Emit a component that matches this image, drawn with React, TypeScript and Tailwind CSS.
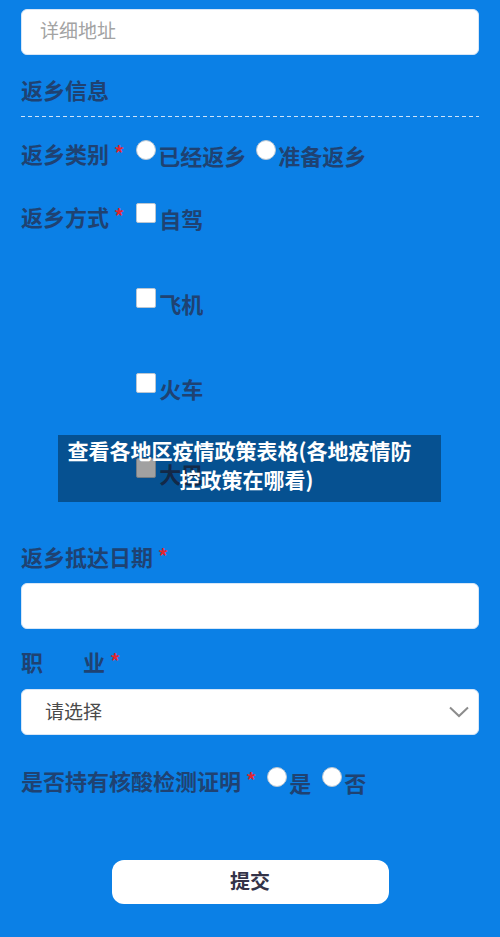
import type { ReactNode } from "react";

const labelCls = "text-[22px] font-bold leading-[30px] text-[#1f4272]";

function Star() {
  return <span className="ml-[5px] text-[20px] font-bold leading-[30px] text-[#e3262e]">*</span>;
}

function Radio({ label, className = "" }: { label: string; className?: string }) {
  return (
    <label className={`flex items-start ${className}`}>
      <span className="mt-[2px] h-[20px] w-[20px] shrink-0 rounded-full border border-[#b9c6d3] bg-white" />
      <span className={`ml-[2px] mt-[2px] ${labelCls}`}>{label}</span>
    </label>
  );
}

function Checkbox({ label }: { label: string }) {
  return (
    <label className="flex items-start">
      <span className="mt-[2px] h-[20px] w-[20px] shrink-0 rounded-[2px] border border-[#b9c6d3] bg-white" />
      <span className={`ml-[3px] mt-[2px] ${labelCls}`}>{label}</span>
    </label>
  );
}

function Field({ children, className = "" }: { children?: ReactNode; className?: string }) {
  return (
    <div
      className={`flex h-[46px] items-center rounded-[6px] border border-[#d6e6f7] bg-white text-[19px] ${className}`}
    >
      {children}
    </div>
  );
}

export default function App() {
  return (
    <div className="relative min-h-[937px] w-[500px] overflow-hidden bg-[#0b80e6] font-['Noto_Sans_CJK_SC','Noto_Sans',sans-serif]">
      <div className="px-[21px] pt-[9px]">
        <Field className="pl-[18px] text-[#a3a3a3]">
          <span className="-mt-[3px]">详细地址</span>
        </Field>

        <h2 className={`mt-[19px] ${labelCls}`}>返乡信息</h2>
        <div className="mt-[12px] h-px bg-[repeating-linear-gradient(90deg,#cde3fa_0_4px,transparent_4px_7px)]" />

        <div className="mt-[21px] flex items-start">
          <span className={labelCls}>返乡类别</span>
          <Star />
          <Radio label="已经返乡" className="ml-[12px]" />
          <Radio label="准备返乡" className="ml-[10px]" />
        </div>

        <div className="mt-[31px] flex items-start">
          <span className={labelCls}>返乡方式</span>
          <Star />
          <div className="ml-[12px] flex flex-col gap-[53px]">
            <Checkbox label="自驾" />
            <Checkbox label="飞机" />
            <Checkbox label="火车" />
            <Checkbox label="大巴" />
          </div>
        </div>

        <div className="mt-[53px] flex items-start">
          <span className={labelCls}>返乡抵达日期</span>
          <Star />
        </div>
        <Field className="mt-[12px]" />

        <div className="mt-[17px] flex items-start">
          <span className={labelCls}>职</span>
          <span className={`ml-[40px] ${labelCls}`}>业</span>
          <Star />
        </div>
        <Field className="mt-[13px] justify-between pl-[23px] pr-[9px] text-[#4a4a4a]">
          <span className="-mt-[1px]">请选择</span>
          <svg width="20" height="12" viewBox="0 0 20 12" fill="none">
            <polyline points="1,1.5 10,10 19,1.5" stroke="#8c8c8c" strokeWidth="2" />
          </svg>
        </Field>

        <div className="mt-[30px] flex items-start">
          <span className={labelCls}>是否持有核酸检测证明</span>
          <Star />
          <Radio label="是" className="ml-[11px]" />
          <Radio label="否" className="ml-[11px]" />
        </div>

        <div className="mt-[63px] flex justify-center">
          <button className="h-[44px] w-[277px] rounded-[12px] bg-white pb-[2px] text-[20px] font-bold text-[#333348]">
            提交
          </button>
        </div>
      </div>

      <div className="absolute left-[58px] top-[435px] flex h-[67px] w-[383px] flex-col bg-black/[0.37] pt-px text-center text-[21px] font-bold leading-[29px] text-white">
        <span className="pr-[20px]">查看各地区疫情政策表格(各地疫情防</span>
        <span className="pr-[6px]">控政策在哪看)</span>
      </div>
    </div>
  );
}
